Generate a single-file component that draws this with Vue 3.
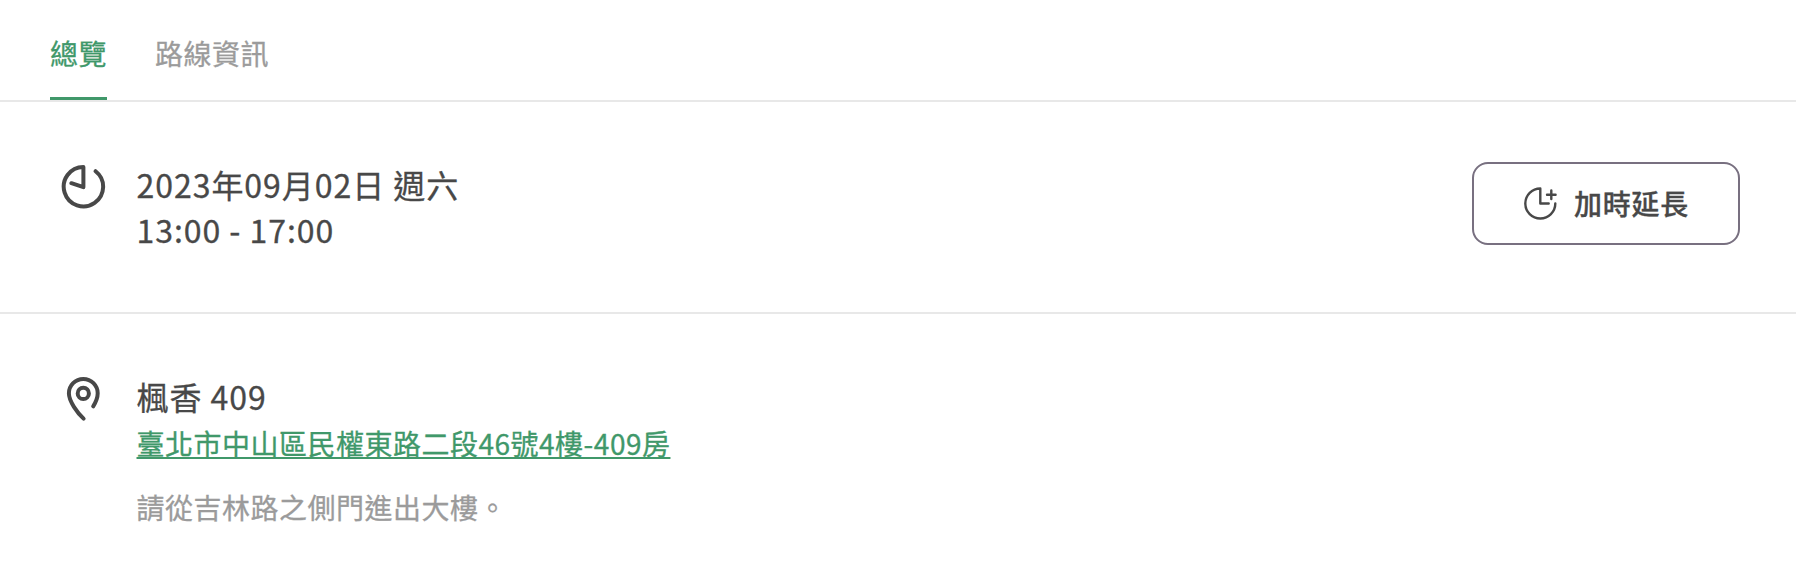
<template>
  <!-- 訂單詳情容器 -->
  <div class="order-detail">
    <!-- 分頁標籤 -->
    <nav class="tabs">
      <button
        v-for="tab in tabs"
        :key="tab.key"
        class="tab"
        :class="{ active: tab.key === activeTab }"
        @click="activeTab = tab.key"
      >{{ tab.label }}</button>
    </nav>

    <!-- 預約時間 -->
    <section class="section time-section">
      <svg class="icon" viewBox="0 0 48 48" fill="none">
        <path d="M36.6 9.2A19.7 19.7 0 1 1 24.4 5V25.2L12.4 21.2" />
      </svg>
      <div class="info">
        <div class="title">{{ booking.date }}</div>
        <div class="title">{{ booking.time }}</div>
      </div>
      <button class="btn-extend">
        <svg class="icon-extend" viewBox="0 0 36 36" fill="none">
          <path d="M33.3 18.5A15 15 0 1 1 18.3 3.5V18.5H26.7M29.3 5.5V14.1M25 9.8H33.6" />
        </svg>
        <span>加時延長</span>
      </button>
    </section>

    <!-- 地點資訊 -->
    <section class="section place-section">
      <svg class="icon" viewBox="0 0 48 48" fill="none">
        <path d="M24.6 44.6C18.4 38.8 9.9 27.4 9.9 19.3A14.4 14.4 0 0 1 38.7 19.3C38.7 23.5 36.8 28.2 34.2 32.4" />
        <circle cx="24.3" cy="19.4" r="5.6" />
      </svg>
      <div class="info">
        <div class="title">{{ booking.place }}</div>
        <a class="address" href="#">{{ booking.address }}</a>
        <p class="note">{{ booking.note }}</p>
      </div>
    </section>
  </div>
</template>

<script setup>
import { ref } from 'vue';

// 分頁列表
const tabs = [
  { key: 'overview', label: '總覽' },
  { key: 'route', label: '路線資訊' }
];
// 目前分頁
const activeTab = ref('overview');

// 預約資料
const booking = ref({
  date: '2023年09月02日 週六',
  time: '13:00 - 17:00',
  place: '楓香 409',
  address: '臺北市中山區民權東路二段46號4樓-409房',
  note: '請從吉林路之側門進出大樓。'
});
</script>

<style>
body {
  margin: 0;
  background: #fff;
}
</style>

<style scoped>
.order-detail {
  height: 582px;
  overflow: hidden;
  box-sizing: border-box;
  background: #fff;
  color: #484848;
  font-family: "Noto Sans CJK TC", sans-serif;
  letter-spacing: 0.5px;
  -webkit-text-stroke: 0.3px currentColor;
}
button {
  font: inherit;
  letter-spacing: inherit;
  background: none;
  cursor: pointer;
}
/* 分頁標籤 */
.tabs {
  display: flex;
  gap: 48px;
  height: 100px;
  padding: 0 50px;
  border-bottom: 2px solid #e8e8e8;
}
.tab {
  box-sizing: border-box;
  height: 100px;
  padding: 9px 0 0;
  border: 0;
  border-bottom: 3px solid transparent;
  color: #9b9b9b;
  font-size: 28px;
}
.tab.active {
  color: #40986a;
  border-bottom-color: #40986a;
}
/* 資訊區塊 */
.section {
  display: flex;
  align-items: flex-start;
  box-sizing: border-box;
  padding: 60px 56px 0 59px;
}
.time-section {
  height: 212px;
  border-bottom: 2px solid #e8e8e8;
}
.icon {
  width: 48px;
  height: 48px;
  margin-right: 29.5px;
  stroke: #484848;
  stroke-width: 4;
  stroke-linecap: round;
  stroke-linejoin: round;
}
.info {
  flex: 1;
}
.title {
  font-size: 32px;
  line-height: 45px;
  letter-spacing: 0.96px;
}
.address {
  display: block;
  width: fit-content;
  color: #40986a;
  font-size: 28px;
  line-height: 48px;
  text-decoration: underline;
}
.note {
  margin: 16px 0 0;
  color: #9b9b9b;
  font-size: 28px;
  line-height: 48px;
}
/* 加時按鈕 */
.btn-extend {
  display: flex;
  align-items: center;
  justify-content: center;
  gap: 16px;
  box-sizing: border-box;
  width: 268px;
  height: 83px;
  padding: 0 1px 1px 0;
  border: 2px solid #787080;
  border-radius: 16px;
  color: #484848;
  font-size: 28px;
  font-weight: 500;
  letter-spacing: 0.8px;
}
.icon-extend {
  width: 36px;
  height: 36px;
  stroke: #484848;
  stroke-width: 2.4;
  stroke-linecap: round;
  stroke-linejoin: round;
}
</style>
